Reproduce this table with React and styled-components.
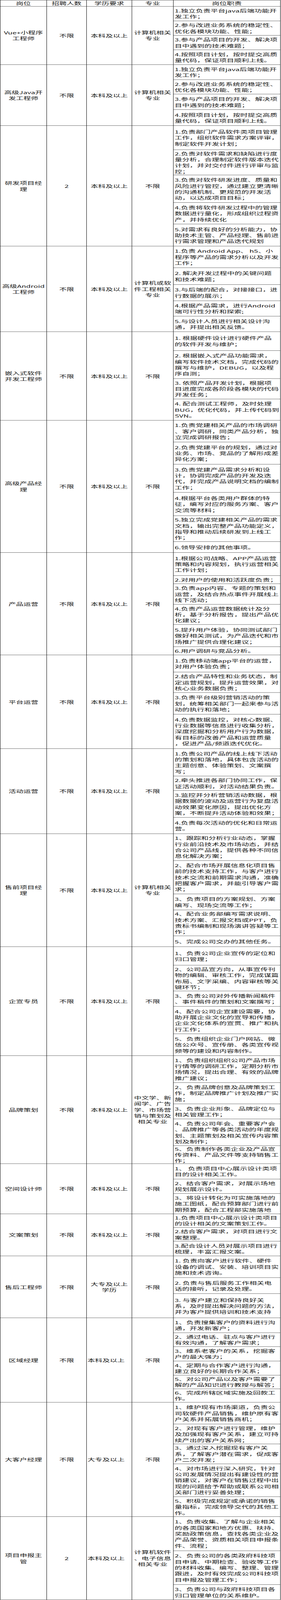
import React from "react";
import styled, { createGlobalStyle } from "styled-components";

const GlobalStyle = createGlobalStyle`
  html, body { margin: 0; padding: 0; background: #fff; }
  body { min-height: 7200px; }
  * { box-sizing: border-box; }
`;

const COLS = "119px 102px 116px 106px 274px";

/* The sandbox window is clamped to 4096px and the 7200px capture is stretched
   from it, so the sheet is pre-compressed vertically by the same ratio. */
const Frame = styled.div`
  width: 719px;
  transform: scaleY(${4096 / 7200});
  transform-origin: 0 0;
`;

const Sheet = styled.div`
  width: 718px;
  border-left: 1px solid #000;
  border-top: 1px solid #000;
  font-family: "Noto Sans CJK SC", "Microsoft YaHei", "Noto Sans", sans-serif;
  font-size: 19px;
  line-height: 27px;
  color: #141414;
`;

const HeaderRow = styled.div`
  display: grid;
  grid-template-columns: ${COLS};
  height: 27px;
`;

const HeadCell = styled.div`
  display: flex;
  align-items: center;
  justify-content: center;
  border-right: 1px solid #000;
  border-bottom: 1px solid #000;
  white-space: nowrap;
`;

const JobRow = styled.div`
  display: grid;
  grid-template-columns: ${COLS};
`;

const InfoCell = styled.div`
  display: flex;
  flex-direction: column;
  justify-content: center;
  align-items: ${(p) => (p.$left ? "flex-start" : "center")};
  text-align: ${(p) => (p.$left ? "left" : "center")};
  padding: 0 2px;
  border-right: 1px solid #000;
  border-bottom: 1px solid #000;
`;

const DutyList = styled.div`
  display: flex;
  flex-direction: column;
`;

const DutyCell = styled.div`
  height: ${(p) => p.$h}px;
  display: flex;
  flex-direction: column;
  justify-content: center;
  padding: 0 2px 0 3px;
  border-right: 1px solid #000;
  border-bottom: 1px solid #000;
`;

const Line = styled.span`
  display: block;
  white-space: nowrap;
`;

const jobs = [
  {
    title: ["Vue+小程序", "工程师"], count: ["不限"], edu: ["本科及以上"], major: ["计算机相关", "专业"],
    duties: [
      [67, ["1.独立负责平台java后端功能开", "发工作；"]],
      [65, ["2.参与改进业务系统的稳定性、", "优化各模块功能、性能；"]],
      [65, ["3.参与产品项目的开发、解决项", "目中遇到的技术难题；"]],
      [66, ["4.按照项目计划，按时提交高质", "量代码，保证项目顺利上线。"]],
    ],
  },
  {
    title: ["高级Java开", "发工程师"], count: ["不限"], edu: ["本科及以上"], major: ["计算机相关", "专业"],
    duties: [
      [68, ["1.独立负责平台java后端功能开", "发工作；"]],
      [65, ["2.参与改进业务系统的稳定性、", "优化各模块功能、性能；"]],
      [70, ["3.参与产品项目的开发、解决项", "目中遇到的技术难题；"]],
      [72, ["4.按照项目计划，按时提交高质", "量代码，保证项目顺利上线。"]],
    ],
  },
  {
    title: ["研发项目经", "理"], count: ["2"], edu: ["本科及以上"], major: ["不限"],
    duties: [
      [108, ["1.负责部门产品软件类项目管理", "工作，组织软件需求方案评审，", "制定软件开发计划；"]],
      [114, ["2.负责对软件需求和缺陷进行度", "量分析，合理制定软件版本迭代", "计划，并对交付件进行评审与监", "控；"]],
      [124, ["3.负责对软件研发进度、质量和", "风险进行管控，通过建立更清晰", "的沟通机制、更规范的开发活", "动，以达成项目目标；"]],
      [97, ["4.负责将软件研发过程中的管理", "数据进行量化，形成组织过程资", "产，并持续优化"]],
      [99, ["5.对需求有良好的分析能力，协", "助技术主管、产品经理、售前进", "行需求管理和产品迭代规划"]],
    ],
  },
  {
    title: ["高级Android", "工程师"], count: ["不限"], edu: ["本科及以上"], major: ["计算机或软", "件工程相关", "专业"],
    duties: [
      [97, ["1.负责 Android App、 h5、小", "程序等产品的需求分析以及开发", "工作；"]],
      [76, ["2. 解决开发过程中的关键问题", "和技术难题；"]],
      [73, ["3.与后端的配合，对接接口，进", "行数据的展示；"]],
      [69, ["4.根据产品需求，进行Android", "端可行性分析和探索;"]],
      [70, ["5.与设计人员进行相关设计沟", "通，并提出相关反馈。"]],
    ],
  },
  {
    title: ["嵌入式软件", "开发工程师"], count: ["不限"], edu: ["本科及以上"], major: ["不限"],
    duties: [
      [85, ["1. 根据硬件设计进行硬件产品", "的软件开发与维护；"]],
      [126, ["2. 根据嵌入式产品功能需求，", "编写软件技术文档，完成代码的", "撰写与维护，DEBUG，以及程", "序自测；"]],
      [92, ["3. 依照产品开发计划，根据项", "目进度完成各阶段各模块的代码", "开发任务；"]],
      [96, ["4. 配合测试工程师，及时处理", "BUG，优化代码，并上传代码到", "SVN。"]],
    ],
  },
  {
    title: ["高级产品经", "理"], count: ["不限"], edu: ["本科及以上"], major: ["不限"],
    duties: [
      [98, ["1.负责党建相关产品的市场调研", "、客户调研，同类产品分析，独", "立完成调研报告；"]],
      [100, ["2.负责党建平台的规划，通过对", "业务、市场、竞品的了解形成差", "异化方案；"]],
      [126, ["3.负责党建产品需求分析和设", "计，协调完成产品的开发及迭", "代，并完成产品说明文档的编制", "工作；"]],
      [105, ["4.根据平台各类用户群体的特", "征，编写对应的服务方案、客户", "交流等材料；"]],
      [117, ["5.独立完成党建相关产品的需求", "文档，输出完整产品功能定义，", "指导和推动后续研发到上线工", "作；"]],
      [49, ["6.领导安排的其他事项。"]],
    ],
  },
  {
    title: ["产品运营"], count: ["不限"], edu: ["本科及以上"], major: ["不限"],
    duties: [
      [104, ["1.根据公司战略、APP产品运营", "策略和内容规划，执行运营相关", "工作计划；"]],
      [36, ["2.对用户的使用和活跃度负责；"]],
      [93, ["3.负责app内容、专题的策划和", "运营，及结合热点事件开展线上", "线下活动；"]],
      [91, ["4.负责产品运营数据统计及分", "析，基于分析报告，提出产品优", "化建议；"]],
      [100, ["5.提升用户体验，协同测试部门", "做好相关测试，为产品迭代和市", "场推广提供合理化建议；"]],
      [37, ["6.用户调研与竞品分析。"]],
    ],
  },
  {
    title: ["平台运营"], count: ["不限"], edu: ["本科及以上"], major: ["不限"],
    duties: [
      [77, ["1.负责移动端app平台的运营，", "对用户体验负责；"]],
      [92, ["2.结合产品特性和业务状态，制", "定运营规划，提升运营效果，对", "核心业务数据负责；"]],
      [98, ["3.负责平台级别营销活动的策", "划，统筹相关部门一起来参与活", "动的执行和落地；"]],
      [154, ["4.负责数据监控，对核心数据、", "行业数据等信息进行收集分析，", "深度挖掘和分析用户行为数据，", "有目标的改善产品和运营质量", "，促进产品/频道迭代优化。"]],
    ],
  },
  {
    title: ["活动运营"], count: ["不限"], edu: ["本科及以上"], major: ["不限"],
    duties: [
      [124, ["1.负责公司产品的线上线下活动", "的策划和落地，具体包含活动的", "主题创意、体验策划、文案撰", "写；"]],
      [65, ["2.牵头推进各部门协同工作，保", "证活动顺利，对活动结果负责。"]],
      [121, ["3.监控并分析营销活动数据，根", "据数据的波动及运营行为复盘活", "动效果变化原因，提出优化方", "案，不断提升活动体验和效果；"]],
      [73, ["4.负责每次活动的优化和日常运", "营。"]],
    ],
  },
  {
    title: ["售前项目经", "理"], count: ["不限"], edu: ["本科及以上"], major: ["计算机相关", "专业"],
    duties: [
      [121, ["1、跟踪和分析行业动态，掌握", "行业前沿技术及市场动态，并结", "合公司产品线，提供各种不同信", "息化解决方案；"]],
      [150, ["2、配合市场开展信息化项目售", "前的技术支持工作，与客户进行", "技术交流和前期需求沟通，准确", "把握客户需求，并能引导客户需", "求；"]],
      [72, ["3、负责项目的方案规划、方案", "编写、现场交流等工作；"]],
      [117, ["4、配合业务部编写需求说明、", "技术方案、汇报文档或PPT，负", "责标书编制和现场演讲答疑等工", "作；"]],
      [49, ["5、完成公司交办的其他任务。"]],
    ],
  },
  {
    title: ["企宣专员"], count: ["不限"], edu: ["本科及以上"], major: ["不限"],
    duties: [
      [83, ["1、负责公司企业宣传的定位和", "归口管理；"]],
      [116, ["2、公司品宣方向，从事宣传刊", "物的编辑、审核工作，完成谋篇", "布局、文字采编、内容审核等关", "键环节；"]],
      [69, ["3、负责公司对外传播新闻稿件", "、事件稿件的策划和文案撰写；"]],
      [124, ["4、配合公司企宣建设需要，协", "助开展企业文化的宣导和传播，", "企业文化体系的宣贯、推广和执", "行工作；"]],
      [98, ["5、负责组织企业门户网站、微", "信公众号、宣传册、各类宣传视", "频等的建设和内容制作。"]],
    ],
  },
  {
    title: ["品牌策划"], count: ["不限"], edu: ["本科及以上"], major: ["中文学、新", "闻学、广告", "学、市场营", "销与策划及", "相关专业"],
    duties: [
      [121, ["1、负责组织组织公司产品市场", "行情等的调研工作，定期分析市", "场情况，提出合理、有效的品牌", "推广建议；"]],
      [96, ["2、负责品牌创意及品牌策划工", "作，制定品牌推广计划及推广实", "施；"]],
      [68, ["3、负责企业形象、品牌定位与", "相关管理工作；"]],
      [120, ["4、负责公司年会、重要客户会", "、品牌推广等各类活动的年度规", "划、主题策划及相关宣传内容策", "划及制作；"]],
      [81, ["5、负责制作各类企业及产品宣", "传资料、产品文件等支持销售工", "作；"]],
    ],
  },
  {
    title: ["空间设计师"], count: ["不限"], edu: ["本科及以上"], major: ["不限"],
    duties: [
      [69, ["1、 负责项目中心展示设计类项", "目的设计相关工作。"]],
      [65, ["2、结合客户需求，对展示场地", "规划展示设计。"]],
      [92, ["3、将设计转化为可实施落地的", "施工图纸，配合预算部门进行前", "期预算，配合工程部实施落地"]],
    ],
  },
  {
    title: ["文案策划"], count: ["不限"], edu: ["本科及以上"], major: ["不限"],
    duties: [
      [61, ["1.负责项目中心展示设计类项目", "的设计相关的文案策划工作。"]],
      [62, ["2.结合客户需求，对项目进行文", "案整理。"]],
      [66, ["3.配合设计人员对展示项目进行", "梳理，丰富汇报文案。"]],
    ],
  },
  {
    title: ["售后工程师"], count: ["不限"], edu: ["大专及以上", "学历"], major: ["不限"],
    duties: [
      [98, ["1. 负责向客户进行软件、硬件", "设备的调试、安装、培训项目实", "施和技术咨询。"]],
      [72, ["2. 负责与售后服务工作相关电", "话的接听，记录及处理。"]],
      [109, ["3. 与客户建立和保持良好关", "系，及时提出解决问题的方法，", "并为客户提供培训和技术支持"]],
    ],
  },
  {
    title: ["区域经理"], count: ["不限"], edu: ["本科及以上"], eduLeft: true, major: ["不限"],
    duties: [
      [67, ["1、负责搜集客户的资料进行沟", "通，开发新客户；"]],
      [62, ["2、通过电话、驻点与客户进行", "有效沟通，了解客户需求；"]],
      [65, ["3、维系老客户的关系，挖掘客", "户的最大强力；"]],
      [64, ["4、定期与合作客户进行沟通，", "建立良好的长期合作关系；"]],
      [61, ["5、对公司产品以及客户需要了", "解的产品知识进行教授与解答；"]],
      [61, ["6、完成所辖区域实施及回款工", "作。"]],
    ],
  },
  {
    title: ["大客户经理"], count: ["不限"], edu: ["大专及以上"], eduLeft: true, major: ["不限"],
    duties: [
      [98, ["1、维护现有市场渠道，负责公", "司软硬件产品销售，维护原有客", "户关系并拓展销售商机；"]],
      [89, ["2、对现有客户进行管理，维护", "及加强现有客户关系，建立可持", "续产出的客户关系网；"]],
      [90, ["3、通过深入挖掘现有客户关", "系，了解客户潜在需求，促成客", "户二次开发；"]],
      [148, ["4、对市场进行深入研究，针对", "公司发展情况提出有建设性的营", "销建议，对客户在销售过程中出", "现的问题给予帮助或联系公司相", "关部门进行妥善处理；"]],
      [89, ["5、积极完成规定或承诺的销售", "量指标，完成领导交代的其他工", "作。"]],
    ],
  },
  {
    title: ["项目申报主", "管"], count: ["2"], edu: ["本科及以上"], eduLeft: true, major: ["计算机软件", "、电子信息", "相关专业"],
    duties: [
      [154, ["1、负责收集、了解与企业相关", "的各类国家和地方优惠、扶持、", "奖励政策信息，查找各类企业及", "产品荣誉、资质相关项目申报条", "件、流程；"]],
      [152, ["2、负责公司的各类政府科技项", "目申请、中期检查、验收等工作", "的材料收集、编写、整理、管理", "跟进，及时有效完成公司科技项", "目申报及管理工作；"]],
      [68, ["3、负责公司与政府科技项目各", "归口管理单位的关系维护。"]],
    ],
  },
];

const headers = ["岗位", "招聘人数", "学历要求", "专业", "岗位职责"];

const Lines = ({ lines }) => lines.map((l, i) => <Line key={i}>{l}</Line>);

export default function App() {
  return (
    <>
      <GlobalStyle />
      <Frame>
        <Sheet>
          <HeaderRow>
            {headers.map((h) => (
              <HeadCell key={h}>{h}</HeadCell>
            ))}
          </HeaderRow>
          {jobs.map((job, idx) => (
            <JobRow key={idx}>
              <InfoCell><Lines lines={job.title} /></InfoCell>
              <InfoCell><Lines lines={job.count} /></InfoCell>
              <InfoCell $left={job.eduLeft}><Lines lines={job.edu} /></InfoCell>
              <InfoCell><Lines lines={job.major} /></InfoCell>
              <DutyList>
                {job.duties.map(([h, lines], j) => (
                  <DutyCell key={j} $h={h}>
                    <Lines lines={lines} />
                  </DutyCell>
                ))}
              </DutyList>
            </JobRow>
          ))}
        </Sheet>
      </Frame>
    </>
  );
}
